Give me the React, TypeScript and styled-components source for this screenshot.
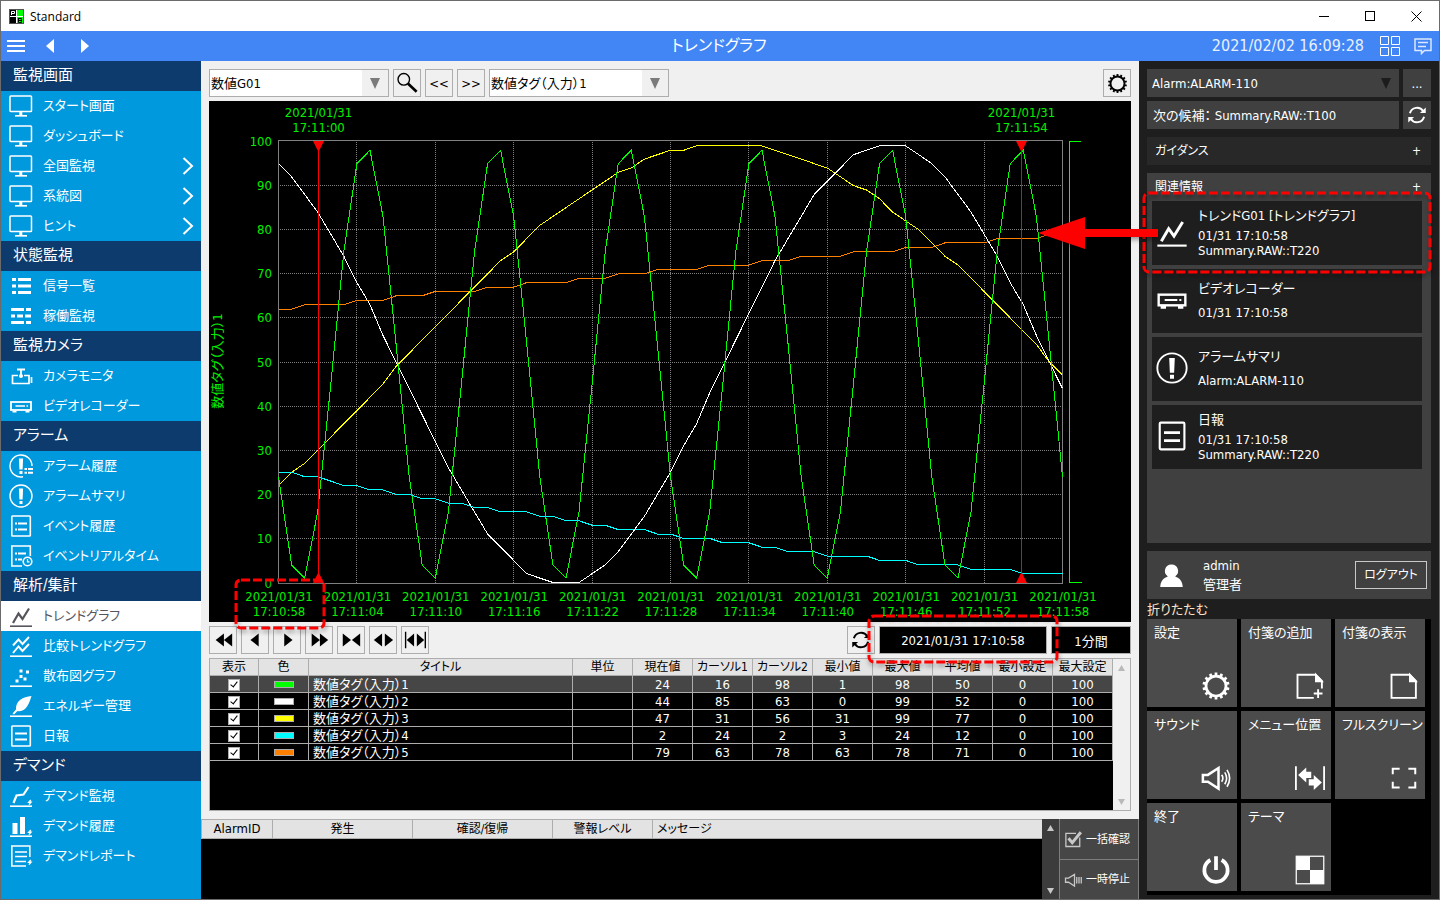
import React from "react";
import styled, { createGlobalStyle, css } from "styled-components";

/* ---------- base ---------- */

const uiFont = `"DejaVu Sans Condensed", "Noto Sans CJK JP", sans-serif`;

const GlobalStyle = createGlobalStyle`
  *, *::before, *::after { box-sizing: border-box; }
  body {
    margin: 0;
    background: #1e1e1e;
    font-family: ${uiFont};
    font-size: 13px;
    line-height: 15px;
    font-feature-settings: "palt";
    color: #000;
  }
  button, input, select, table {
    font: inherit;
    font-feature-settings: inherit;
    color: inherit;
  }
  button { padding: 0; cursor: pointer; }
  a { color: inherit; text-decoration: none; }
  svg { display: block; }
`;

const Window = styled.div`
  display: flex;
  flex-direction: column;
  min-height: 100vh;
  border: 1px solid #6b6b6b;
  white-space: nowrap;
`;

/* ---------- title bar ---------- */

const TitleBar = styled.header`
  display: flex;
  align-items: center;
  height: 30px;
  padding-left: 8px;
  gap: 6px;
  background: #fff;
  font-family: "Open Sans", sans-serif;
  font-size: 12px;
`;

const TitleText = styled.span`
  flex: 1;
`;

const WindowButton = styled.button`
  display: grid;
  place-items: center;
  width: 46px;
  height: 30px;
  border: 0;
  background: none;
`;

const WindowButtons = styled.div`
  display: flex;
`;

/* ---------- application header ---------- */

const AppHeader = styled.div`
  display: grid;
  grid-template-columns: 1fr auto 1fr;
  align-items: center;
  height: 30px;
  padding: 0 7px 0 5px;
  background: #4286f5;
  color: #fff;
`;

const PageTitle = styled.h1`
  margin: 0;
  font-size: 16px;
  font-weight: 400;
  line-height: 24px;
`;

const HeaderGroup = styled.div<{ $end?: boolean }>`
  display: flex;
  align-items: center;
  justify-content: ${(p) => (p.$end ? "flex-end" : "flex-start")};
  gap: ${(p) => (p.$end ? 14 : 0)}px;
`;

const IconButton = styled.button<{ $width?: number }>`
  display: grid;
  place-items: center;
  width: ${(p) => (p.$width ? `${p.$width}px` : "auto")};
  border: 0;
  background: none;
  color: inherit;
`;

const MenuButton = styled(IconButton)`
  margin-right: 6px;
`;

const Clock = styled.time`
  font-size: 16px;
  line-height: 24px;
  margin-right: 2px;
  color: #e8f0ff;
`;

/* ---------- side navigation ---------- */

const Body = styled.div`
  display: grid;
  grid-template-columns: 200px minmax(0, 1fr) 300px;
  flex: 1;
`;

const Sidebar = styled.nav`
  background: #0099dd;
  color: #fff;
`;

const NavHeading = styled.h2`
  margin: 0;
  height: 30px;
  padding-left: 12px;
  background: #0e3b6d;
  font-size: 15px;
  font-weight: 400;
  line-height: 29px;
`;

const NavLink = styled.a<{ $active?: boolean }>`
  display: flex;
  align-items: center;
  height: 30px;
  padding: 0 7px 0 8px;
  gap: 10px;
  font-size: 13px;
  line-height: 20px;
  ${(p) =>
    p.$active &&
    css`
      background: #fff;
      color: #55555c;
    `}
`;

const NavLabel = styled.span`
  flex: 1;
`;

/* ---------- main column ---------- */

const Main = styled.main`
  display: flex;
  flex-direction: column;
  background: #f0f0f0;
`;

const Workspace = styled.section`
  display: flex;
  flex: 1;
  flex-direction: column;
  gap: 4px;
  padding: 8px;
`;

const Toolbar = styled.div`
  display: flex;
  gap: 4px;
`;

const Spacer = styled.div`
  flex: 1;
`;

const ToolButton = styled.button`
  display: grid;
  place-items: center;
  width: 28px;
  height: 28px;
  border: 1px solid #adadad;
  background: #f0f0f0;
`;

const SelectBox = styled.div<{ $dark?: boolean }>`
  display: grid;
  grid-template-columns: minmax(0, 1fr) 26px;
  align-items: center;
  width: ${(p) => (p.$dark ? "auto" : "180px")};
  flex: ${(p) => (p.$dark ? "1" : "none")};
  height: 28px;
  border: ${(p) => (p.$dark ? "0" : "1px solid #adadad")};
  background: ${(p) =>
    p.$dark ? "#404040" : "linear-gradient(to left, #f0f0f0 26px, #fff 26px)"};
  color: ${(p) => (p.$dark ? "#fff" : "#000")};

  select {
    grid-area: 1 / 1 / 2 / 3;
    width: 100%;
    height: 100%;
    padding: 0 28px 0 ${(p) => (p.$dark ? 5 : 1)}px;
    border: 0;
    background: transparent;
    appearance: none;
  }
  svg {
    grid-area: 1 / 2 / 2 / 3;
    justify-self: center;
    pointer-events: none;
    color: ${(p) => (p.$dark ? "#1c1c1c" : "#7b7b7b")};
  }
`;

const ChartFrame = styled.figure`
  position: relative;
  margin: 0;
  background: #000;
`;

const ChartSvg = styled.svg`
  width: 100%;
  height: auto;

  text {
    font-size: 13px;
    fill: #00f000;
  }
`;

const Anchor = styled.div`
  position: relative;
`;

const Readout = styled.input<{ $width: number }>`
  display: block;
  width: ${(p) => p.$width}px;
  height: 28px;
  padding: 0;
  border: 1px solid #adadad;
  border-radius: 0;
  background: #000;
  color: #fff;
  text-align: center;
`;

const CalloutSvg = styled.svg`
  position: absolute;
  z-index: 2;
  overflow: visible;
  pointer-events: none;
  filter: drop-shadow(1px 3px 2px rgba(0, 0, 0, 0.35));
`;

const StartCallout = styled(CalloutSvg)`
  left: 27px;
  bottom: -6px;
  width: 88px;
  height: 48px;
`;

const DateCallout = styled(CalloutSvg)`
  left: -10px;
  top: -10px;
  width: 188px;
  height: 46px;
`;

const CardCallout = styled(CalloutSvg)`
  left: -8px;
  top: -8px;
  width: 286px;
  height: 79px;
`;

const ArrowSvg = styled(CalloutSvg)`
  right: 264px;
  top: 16px;
`;

/* ---------- tables ---------- */

const ListPanel = styled.div`
  display: flex;
  flex: 1;
  min-height: 153px;
  border: 1px solid #adadad;
  background: #000;
`;

const TableArea = styled.div`
  flex: 1;
  min-width: 0;
`;

const DataTable = styled.table`
  width: 100%;
  table-layout: fixed;
  border-collapse: separate;
  border-spacing: 0;

  th {
    padding: 0;
    background: #e3e3e3;
    color: #000;
    font-weight: 400;
    border-right: 1px solid #adadad;
    border-bottom: 1px solid #adadad;
  }
`;

const TrendTable = styled(DataTable)`
  color: #fff;
  text-align: center;

  th,
  td {
    height: 17px;
    padding: 0;
    line-height: 15px;
    border-right: 1px solid #adadad;
    border-bottom: 1px solid #adadad;
  }
  th {
    font-size: 12px;
  }
`;

const TrendRow = styled.tr<{ $selected?: boolean }>`
  background: ${(p) => (p.$selected ? "#464646" : "#000")};

  td:nth-child(3) {
    padding-left: 4px;
    text-align: left;
  }
`;

const Col = styled.col<{ $width?: number }>`
  width: ${(p) => (p.$width ? `${p.$width}px` : "auto")};
`;

const Tick = styled.input`
  display: block;
  width: 12px;
  height: 12px;
  margin: 1px auto 0;
  border: 1px solid #adadad;
  background: #fff;
  appearance: none;

  &:checked::before {
    content: "";
    display: block;
    width: 4px;
    height: 7px;
    margin: 0 0 0 3px;
    border: solid #000;
    border-width: 0 1px 1px 0;
    transform: rotate(38deg);
  }
`;

const Swatch = styled.span<{ $color: string }>`
  display: block;
  width: 20px;
  height: 7px;
  margin: 0 auto;
  border: 1px solid #adadad;
  background: ${(p) => p.$color};
`;

const ScrollBar = styled.div<{ $dark?: boolean }>`
  display: flex;
  flex-direction: column;
  justify-content: space-between;
  align-items: center;
  width: 17px;
  padding: 6px 0 5px;
  background: ${(p) => (p.$dark ? "#3c3c3c" : "#f0f0f0")};
  color: ${(p) => (p.$dark ? "#c8c8c8" : "#b9b9b9")};
`;

const AlarmBar = styled.section`
  display: flex;
  min-height: 80px;
  background: #000;
`;

const AlarmTable = styled(DataTable)`
  th {
    height: 20px;
    border-top: 1px solid #adadad;
    line-height: 18px;
    font-size: 12px;
  }
  th:first-child {
    border-left: 1px solid #adadad;
    font-size: 13px;
  }
  th:last-child {
    padding-left: 4px;
    border-right: 0;
    text-align: left;
  }
`;

const AlarmActions = styled.div`
  display: grid;
  grid-template-rows: 1fr 1fr;
  width: 80px;
  border-left: 1px solid #7d7d7d;
  border-right: 1px solid #7d7d7d;
`;

const AlarmButton = styled.button`
  display: flex;
  align-items: center;
  gap: 4px;
  padding-left: 4px;
  border: 0;
  background: #464646;
  color: #fff;
  font-size: 11px;

  svg {
    color: #c8c8c8;
  }
  & + & {
    border-top: 1px solid #7d7d7d;
  }
`;

/* ---------- right panel ---------- */

const Panel = styled.aside`
  display: flex;
  flex-direction: column;
  gap: 8px;
  padding: 8px 8px 4px;
  background: #1e1e1e;
  color: #fff;
`;

const PanelRows = styled.div`
  display: grid;
  gap: 4px;
`;

const PanelRow = styled.div`
  display: flex;
  gap: 4px;
`;

const PanelButton = styled.button`
  display: grid;
  place-items: center;
  width: 28px;
  height: 28px;
  border: 0;
  background: #404040;
`;

const Candidate = styled.button`
  flex: 1;
  height: 28px;
  padding-left: 6px;
  border: 0;
  background: #404040;
  text-align: left;
`;

const FoldButton = styled.button<{ $open?: boolean }>`
  display: flex;
  align-items: center;
  justify-content: space-between;
  width: 100%;
  height: 28px;
  padding: 0 10px 0 8px;
  border: 0;
  background: ${(p) => (p.$open ? "#404040" : "#282828")};
  font-size: 12px;
`;

const Related = styled.section`
  flex: 1;
  min-height: 370px;
  background: #404040;
`;

const CardList = styled.div`
  display: grid;
  gap: 4px;
  padding: 0 9px 0 5px;
`;

const Card = styled.button`
  display: flex;
  align-items: center;
  width: 100%;
  height: 64px;
  padding: 0 0 2px 4px;
  gap: 10px;
  border: 0;
  background: #1e1e1e;
  text-align: left;
`;

const CardText = styled.span<{ $tight: boolean }>`
  display: grid;
  row-gap: ${(p) => (p.$tight ? 3 : 7)}px;
`;

const CardTitle = styled.span`
  line-height: 18px;
`;

const CardLine = styled.span`
  display: block;
`;

const User = styled.section`
  display: flex;
  align-items: center;
  height: 48px;
  padding: 0 4px 0 12px;
  gap: 19px;
  background: #404040;
`;

const UserName = styled.div`
  flex: 1;
  line-height: 19px;
`;

const Logout = styled.button`
  width: 72px;
  height: 28px;
  border: 1px solid #c8c8c8;
  background: transparent;
  font-size: 12px;
`;

const AccountArea = styled.div`
  display: grid;
`;

const Collapse = styled.button`
  justify-self: start;
  height: 20px;
  border: 0;
  background: none;
  color: #ffe3c8;
`;

const TileGrid = styled.div`
  display: grid;
  grid-template-columns: repeat(3, 90px);
  gap: 4px;
  padding-bottom: 4px;
  background: #000;
`;

const Tile = styled.button`
  display: flex;
  flex-direction: column;
  align-items: flex-start;
  justify-content: space-between;
  height: 88px;
  padding: 5px 6px 6px 7px;
  border: 0;
  background: #4b4b4b;
  line-height: 18px;

  svg {
    align-self: flex-end;
  }
`;

/* ---------- icons ---------- */

type IconProps = { size?: number; children: React.ReactNode };

const Icon = ({ size = 24, children }: IconProps) => (
  <svg
    width={size}
    height={size}
    viewBox="0 0 24 24"
    fill="none"
    stroke="currentColor"
    strokeWidth={2}
    aria-hidden
  >
    {children}
  </svg>
);

type TriangleProps = { dir: "up" | "down" | "left" | "right"; w?: number; h?: number };

const Triangle = ({ dir, w = 10, h = 11 }: TriangleProps) => {
  const d = {
    up: `M0 ${h}L${w / 2} 0L${w} ${h}Z`,
    down: `M0 0H${w}L${w / 2} ${h}Z`,
    left: `M${w} 0V${h}L0 ${h / 2}Z`,
    right: `M0 0V${h}L${w} ${h / 2}Z`,
  }[dir];
  return (
    <svg width={w} height={h} viewBox={`0 0 ${w} ${h}`} fill="currentColor" aria-hidden>
      <path d={d} />
    </svg>
  );
};

const baseLine = <path d="M1 22.2H23" strokeWidth="1.6" />;
const bolt = <path d="M21.8 16l-2 2.2h2.2l-2 2.4" strokeWidth="1.4" />;
const exclamation = (
  <path
    d="M9.9 4.5H14.1L13.6 15.5H10.4Z M10.5 17H13.5V20H10.5Z"
    fill="currentColor"
    stroke="none"
  />
);

const glyphs: Record<string, React.ReactNode> = {
  monitor: (
    <>
      <rect x="1" y="2" width="21.5" height="15.5" rx="0.8" strokeWidth="1.5" />
      <path d="M11.8 17.5V21" strokeWidth="3" />
      <path d="M6 21.8H18" strokeWidth="1.7" />
    </>
  ),
  list: <path d="M3 5.5H7M9 5.5H22M3 12H7M9 12H22M3 18.5H7M9 18.5H22" strokeWidth="3" />,
  status: <path d="M2 5.5H15M17 5.5H22M2 12H6M8 12H14M16 12H22M2 18.5H15M17 18.5H22" strokeWidth="2.8" />,
  camera: (
    <>
      <path d="M8 5.5H16M12 5.5V11" strokeWidth="1.8" />
      <path d="M9 11.5H3.5V19.5H20V11.5H15M22.5 13V19" strokeWidth="1.7" />
      <circle cx="12" cy="12" r="2" fill="currentColor" stroke="none" />
    </>
  ),
  recorder: (
    <>
      <rect x="2" y="8" width="20" height="8" strokeWidth="1.8" />
      <path d="M6.5 12H16M17.5 12H19" strokeWidth="1.5" />
      <path d="M3.5 17.5H7.5M16.5 17.5H20.5" strokeWidth="2" />
    </>
  ),
  alarm: (
    <>
      <circle cx="12" cy="12" r="11" strokeWidth="1.4" />
      {exclamation}
    </>
  ),
  alarmHistory: (
    <>
      <path d="M23 12A11 11 0 1 0 14 22.8" strokeWidth="1.4" />
      {exclamation}
      <path d="M15.5 15H18M19 15H24M15.5 18.8H18M19 18.8H24" strokeWidth="2" />
    </>
  ),
  event: (
    <>
      <rect x="2.8" y="2" width="18.5" height="20" rx="0.8" strokeWidth="1.6" />
      <path d="M6 9.5H8M9 9.5H18M6 15.5H8M9 15.5H18" strokeWidth="2" />
    </>
  ),
  eventLive: (
    <>
      <path d="M13 22H2.8V2H21.3V12" strokeWidth="1.6" />
      <path d="M6 9.5H8M9 9.5H17M6 15.5H8M9 15.5H13" strokeWidth="2" />
      <circle cx="18.5" cy="17.5" r="4.3" strokeWidth="1.6" />
      <path d="M18.5 15V17.8H20.5" strokeWidth="1.2" />
    </>
  ),
  trend: (
    <>
      <path d="M4 19L9.5 9.5L13.5 15L20 4.5" strokeWidth="2.2" />
      {baseLine}
    </>
  ),
  compare: (
    <>
      <path d="M4 11.5L9.5 5.5L13.5 10L20 3M4 19L9.5 12.5L13.5 17L20 10" strokeWidth="1.9" />
      {baseLine}
    </>
  ),
  scatter: (
    <>
      <path d="M6.5 17H9.5M10.5 12.5H13.5M10.5 7H13.5M14.5 15H17.5M17 8H20" strokeWidth="3" />
      {baseLine}
    </>
  ),
  leaf: (
    <>
      <path
        d="M22.5 2C14 3 6.5 6.500 7 15.5L3.500 19.5L5 20.5L8.5 17C17 18.5 20 10 22.5 2Z"
        fill="currentColor"
        stroke="none"
      />
      {baseLine}
    </>
  ),
  report: (
    <>
      <rect x="2.8" y="2" width="18.5" height="20" rx="0.8" strokeWidth="1.6" />
      <path d="M6 9.5H18M6 15.5H18" strokeWidth="2" />
    </>
  ),
  demand: (
    <>
      <path d="M4.5 19L7.5 11.5L14.5 10.5L19.5 3" strokeWidth="2.2" />
      {bolt}
      {baseLine}
    </>
  ),
  demandBars: (
    <>
      <path d="M6 20V9M13.5 20V3" strokeWidth="5" />
      {bolt}
      {baseLine}
    </>
  ),
  demandReport: (
    <>
      <path d="M17 22H2.8V2H20.8V13" strokeWidth="1.6" />
      <path d="M6 8H18M6 12.5H18M6 17.5H17" strokeWidth="1.7" />
      {bolt}
    </>
  ),
  person: (
    <path
      d="M12 1.5a6.2 6.2 0 0 1 3.5 11.4C20 14.2 22.6 18 22.8 23H1.2C1.400 18 4 14.2 8.5 12.9A6.2 6.2 0 0 1 12 1.5Z"
      fill="currentColor"
      stroke="none"
    />
  ),
  note: (
    <>
      <path d="M2 3H16.5L21.5 8V21.500H2Z" strokeWidth="1.5" />
      <path d="M16.5 2.5V8.5H22Z" fill="currentColor" strokeWidth="1" />
    </>
  ),
  noteAdd: (
    <>
      <path d="M15 21.5H2V3H16.5L21.5 8V14" strokeWidth="1.5" />
      <path d="M16.5 2.5V8.5H22Z" fill="currentColor" strokeWidth="1" />
      <path d="M18.5 14.5V21.5M15 18H22" strokeWidth="1.5" />
    </>
  ),
  sound: (
    <>
      <path d="M1.5 9.5H5.5L14 4V20.500L5.500 15H1.5Z" strokeWidth="2" />
      <path
        d="M16.5 9.500Q18.5 12 16.5 15M19 7.500Q22 12 19 17M20.800 5.500Q25 12 20.800 19"
        strokeWidth="1.3"
      />
    </>
  ),
  soundOff: (
    <path d="M2 9.5H6L14 4.5V20L6 15H2ZM17 8V16.5M20 8V16.5M23 8V16.5" strokeWidth="1.7" />
  ),
  position: (
    <>
      <path d="M0.7 2.5V21.5M23.3 2.5V21.5" strokeWidth="1.5" />
      <path
        d="M2.5 9.5L9 3.5V7H13V12H9V15.5ZM21.5 15.5L15 9.5V13H11V18H15V21.5Z"
        fill="currentColor"
        stroke="none"
      />
    </>
  ),
  fullscreen: (
    <path d="M3 9V4.500H8.5M15.5 4.5H21V9M21 15V19.5H15.5M8.5 19.5H3V15" strokeWidth="1.6" />
  ),
  power: (
    <>
      <path d="M7.5 4A9.3 9.3 0 1 0 16.5 4" strokeWidth="3" />
      <path d="M12 1V12" strokeWidth="3" />
    </>
  ),
  theme: (
    <>
      <rect x="1" y="1" width="22" height="22" strokeWidth="1" />
      <path d="M1 1H12V12H1ZM12 12H23V23H12Z" fill="currentColor" stroke="none" />
    </>
  ),
  refresh: (
    <>
      <path
        d="M3.5 10A8.8 8.8 0 0 1 19.5 7.5M20.5 14A8.8 8.8 0 0 1 4.5 16.5"
        strokeWidth="2.3"
      />
      <path d="M15.5 9.5H22.5V3ZM8.5 14.5H1.5V21Z" fill="currentColor" stroke="none" />
    </>
  ),
  search: (
    <>
      <circle cx="8.5" cy="8" r="6.3" strokeWidth="1.5" />
      <path d="M13 12.5L22.5 21.5" strokeWidth="2.9" />
    </>
  ),
  check: (
    <>
      <path d="M21 10V22H2.5V4.5H16" strokeWidth="1.7" />
      <path d="M6 11L11 17L22.5 3" strokeWidth="4" />
    </>
  ),
};

const Glyph = ({ name, size }: { name: string; size?: number }) => (
  <Icon size={size}>{glyphs[name]}</Icon>
);

const Gear = ({ size = 24 }: { size?: number }) => (
  <Icon size={size}>
    <circle cx="12" cy="12" r="8" strokeWidth="2.2" />
    {Array.from({ length: 14 }, (_, i) => (
      <path
        key={i}
        d="M12 1.2V3.6"
        strokeWidth="2.2"
        transform={`rotate(${(i * 360) / 14} 12 12)`}
      />
    ))}
  </Icon>
);

const Chevron = () => (
  <svg width="12" height="18" viewBox="0 0 12 18" fill="none" stroke="currentColor" strokeWidth="2" aria-hidden>
    <path d="M1.5 1L10 9L1.5 17" />
  </svg>
);

const Logo = () => (
  <svg width="15" height="15" viewBox="0 0 15 15" aria-hidden>
    <rect width="15" height="15" fill="#555" />
    <rect x="1" y="1" width="6" height="13" fill="#000" />
    <rect x="8" y="1" width="6" height="13" fill="#00ff00" />
    <path d="M7.5 1V14M1 7.5H14" stroke="#fff" />
    <path d="M2.5 6V2.5H5.5V4.5H3" fill="none" stroke="#fff" />
    <path d="M9.5 9V13.500H12.5V9.5H10M10 11.5H12" fill="none" stroke="#000" />
  </svg>
);

/* ---------- trend chart ---------- */

const seconds = Array.from({ length: 61 }, (_, i) => i);
const pulse = [24, 4, 1, 16, 45, 75, 95, 98, 83, 54];
const wave = (peak: number, period: number) =>
  seconds.map((s) =>
    Math.min(99, Math.floor(50 * (1 + Math.cos((2 * Math.PI * (s - peak)) / period))))
  );
const steps = (start: number, delta: number, runs: number[]) =>
  runs.flatMap((count, i) => Array<number>(count).fill(start + delta * i));

const series = [
  {
    stroke: "#ff8000",
    values: steps(62, 1, [2, 4, 3, 3, 4, 3, 4, 3, 3, 4, 4, 3, 4, 4, 3, 4, 4, 2]),
  },
  {
    stroke: "#00ffff",
    values: steps(25, -1, [2, 2, 1, 2, 2, 2, 2, 2, 2, 3, 2, 2, 2, 3, 2, 3, 3, 2, 3, 4, 3, 4, 4, 4]),
  },
  { stroke: "#ffff00", values: wave(34.3, 100) },
  { stroke: "#ffffff", values: wave(46.6, 50) },
  { stroke: "#00ff00", values: seconds.map((s) => pulse[s % 10]) },
];

const plot = { left: 69, top: 39, width: 784, height: 443 };
const xAt = (s: number) => plot.left + (s * plot.width) / 60;
const yAt = (v: number) => 481.5 - v * 4.41;
const gridX = seconds.filter((s) => s % 6 === 0);
const gridY = [0, 10, 20, 30, 40, 50, 60, 70, 80, 90, 100];
const gridTop = (v: number) => Math.round(481.6 - v * 4.42) + 0.5;
const timeLabel = (s: number) =>
  `17:${s < 2 ? "10" : "11"}:${String((58 + s) % 60).padStart(2, "0")}`;

const cursors = [
  { x: 109.5, second: 2 },
  { x: 812.5, second: 56 },
];

const TimeText = ({ x, y, s }: { x: number; y: number; s: number }) => (
  <text textAnchor="middle" x={x} y={y}>
    <tspan x={x}>2021/01/31</tspan>
    <tspan x={x} dy="15">
      {timeLabel(s)}
    </tspan>
  </text>
);

const TrendChart = () => (
  <ChartSvg viewBox="0 0 922 521" role="img" aria-label="トレンドグラフ">
    <g fill="none" stroke="#808080" strokeDasharray="1 1" shapeRendering="crispEdges">
      {gridX.slice(1, -1).map((s) => (
        <path key={s} d={`M${Math.round(xAt(s)) + 0.5} ${plot.top}V482`} />
      ))}
      {gridY.slice(1, -1).map((v) => (
        <path key={v} d={`M${plot.left} ${gridTop(v)}H853`} />
      ))}
    </g>
    <rect
      x={plot.left + 0.5}
      y={plot.top + 0.5}
      width={plot.width}
      height={plot.height}
      fill="none"
      stroke="#808080"
      shapeRendering="crispEdges"
    />
    {series.map(({ stroke, values }) => (
      <polyline
        key={stroke}
        points={values.map((v, s) => `${(xAt(s) + 0.5).toFixed(1)},${yAt(v).toFixed(1)}`).join(" ")}
        fill="none"
        stroke={stroke}
        shapeRendering="crispEdges"
      />
    ))}
    <path
      d="M872 40.5H860.5V481.5H873"
      fill="none"
      stroke="#00ff00"
      shapeRendering="crispEdges"
    />
    {cursors.map(({ x, second }) => (
      <g key={second}>
        <path d={`M${x} 40V482`} stroke="#ff0000" shapeRendering="crispEdges" />
        <path
          d={`M${x - 5.5} 40H${x + 5.5}L${x} 51ZM${x - 5.5} 482H${x + 5.5}L${x} 471Z`}
          fill="#ff0000"
        />
        <TimeText x={x} y={16} s={second} />
      </g>
    ))}
    {gridY.map((v) => (
      <text key={v} x="63" y={gridTop(v) + 4} textAnchor="end">
        {v}
      </text>
    ))}
    {gridX.map((s) => (
      <TimeText key={s} x={xAt(s) + 1} y={500} s={s} />
    ))}
    <text transform="translate(13 260) rotate(-90)" textAnchor="middle">
      数値タグ（入力）1
    </text>
  </ChartSvg>
);

const DashedRect = () => (
  <rect
    width="100%"
    height="100%"
    rx="5"
    fill="none"
    stroke="#ff0000"
    strokeWidth="3"
    strokeDasharray="9 3"
  />
);

/* ---------- content ---------- */

type NavEntry = { label: string; icon: string; more?: boolean; active?: boolean };

const navigation: { title: string; items: NavEntry[] }[] = [
  {
    title: "監視画面",
    items: [
      { label: "スタート画面", icon: "monitor" },
      { label: "ダッシュボード", icon: "monitor" },
      { label: "全国監視", icon: "monitor", more: true },
      { label: "系統図", icon: "monitor", more: true },
      { label: "ヒント", icon: "monitor", more: true },
    ],
  },
  {
    title: "状態監視",
    items: [
      { label: "信号一覧", icon: "list" },
      { label: "稼働監視", icon: "status" },
    ],
  },
  {
    title: "監視カメラ",
    items: [
      { label: "カメラモニタ", icon: "camera" },
      { label: "ビデオレコーダー", icon: "recorder" },
    ],
  },
  {
    title: "アラーム",
    items: [
      { label: "アラーム履歴", icon: "alarmHistory" },
      { label: "アラームサマリ", icon: "alarm" },
      { label: "イベント履歴", icon: "event" },
      { label: "イベントリアルタイム", icon: "eventLive" },
    ],
  },
  {
    title: "解析/集計",
    items: [
      { label: "トレンドグラフ", icon: "trend", active: true },
      { label: "比較トレンドグラフ", icon: "compare" },
      { label: "散布図グラフ", icon: "scatter" },
      { label: "エネルギー管理", icon: "leaf" },
      { label: "日報", icon: "report" },
    ],
  },
  {
    title: "デマンド",
    items: [
      { label: "デマンド監視", icon: "demand" },
      { label: "デマンド履歴", icon: "demandBars" },
      { label: "デマンドレポート", icon: "demandReport" },
    ],
  },
];

const trendHeads = [
  "表示", "色", "タイトル", "単位", "現在値", "カーソル1", "カーソル2",
  "最小値", "最大値", "平均値", "最小設定", "最大設定",
];

const trendRows = [
  { color: "#00ff00", values: [24, 16, 98, 1, 98, 50, 0, 100] },
  { color: "#ffffff", values: [44, 85, 63, 0, 99, 52, 0, 100] },
  { color: "#ffff00", values: [47, 31, 56, 31, 99, 77, 0, 100] },
  { color: "#00ffff", values: [2, 24, 2, 3, 24, 12, 0, 100] },
  { color: "#ff8000", values: [79, 63, 78, 63, 78, 71, 0, 100] },
];

const cards = [
  { title: "トレンドG01 [トレンドグラフ]", icon: "trend", lines: ["01/31 17:10:58", "Summary.RAW::T220"] },
  { title: "ビデオレコーダー", icon: "recorder", lines: ["01/31 17:10:58"] },
  { title: "アラームサマリ", icon: "alarm", lines: ["Alarm:ALARM-110"] },
  { title: "日報", icon: "report", lines: ["01/31 17:10:58", "Summary.RAW::T220"] },
];

const tiles = [
  { label: "設定", icon: "gear" },
  { label: "付箋の追加", icon: "noteAdd" },
  { label: "付箋の表示", icon: "note" },
  { label: "サウンド", icon: "sound" },
  { label: "メニュー位置", icon: "position" },
  { label: "フルスクリーン", icon: "fullscreen" },
  { label: "終了", icon: "power" },
  { label: "テーマ", icon: "theme" },
];

const playback = [
  { label: "早戻し", d: "M13 5V19L4 12ZM22 5V19L13 12Z" },
  { label: "戻る", d: "M16 5V19L7 12Z" },
  { label: "進む", d: "M9 5V19L18 12Z" },
  { label: "早送り", d: "M4 5V19L13 12ZM13 5V19L22 12Z" },
  { label: "縮小", d: "M3 5V19L12 12ZM22 5V19L13 12Z" },
  { label: "拡大", d: "M11 5V19L2 12ZM14 5V19L23 12Z" },
  { label: "全体", d: "M11 5V19L3 12ZM14 5V19L22 12ZM1 3H2.5V21H1ZM22.5 3H24V21H22.5Z" },
];

/* ---------- page parts ---------- */

const Navigation = () => (
  <Sidebar>
    {navigation.map((group) => (
      <React.Fragment key={group.title}>
        <NavHeading>{group.title}</NavHeading>
        {group.items.map((item) => (
          <NavLink key={item.label} href="#" $active={item.active}>
            <Glyph name={item.icon} />
            <NavLabel>{item.label}</NavLabel>
            {item.more && <Chevron />}
          </NavLink>
        ))}
      </React.Fragment>
    ))}
  </Sidebar>
);

const TrendList = () => (
  <ListPanel>
    <TableArea>
      <TrendTable>
        <colgroup>
          <Col $width={49} />
          <Col $width={50} />
          <Col />
          {trendHeads.slice(3).map((head) => (
            <Col key={head} $width={60} />
          ))}
        </colgroup>
        <thead>
          <tr>
            {trendHeads.map((head) => (
              <th key={head} scope="col">
                {head}
              </th>
            ))}
          </tr>
        </thead>
        <tbody>
          {trendRows.map((row, i) => (
            <TrendRow key={row.color} $selected={i === 0}>
              <td>
                <Tick type="checkbox" defaultChecked aria-label={`数値タグ（入力）${i + 1}`} />
              </td>
              <td>
                <Swatch $color={row.color} />
              </td>
              <td>数値タグ（入力）{i + 1}</td>
              <td />
              {row.values.map((value, k) => (
                <td key={k}>{value}</td>
              ))}
            </TrendRow>
          ))}
        </tbody>
      </TrendTable>
    </TableArea>
    <ScrollBar>
      <Triangle dir="up" w={7} h={6} />
      <Triangle dir="down" w={7} h={6} />
    </ScrollBar>
  </ListPanel>
);

const AlarmList = () => (
  <AlarmBar>
    <TableArea>
      <AlarmTable>
        <colgroup>
          <Col $width={72} />
          <Col $width={140} />
          <Col $width={140} />
          <Col $width={100} />
          <Col />
        </colgroup>
        <thead>
          <tr>
            <th scope="col">AlarmID</th>
            <th scope="col">発生</th>
            <th scope="col">確認/復帰</th>
            <th scope="col">警報レベル</th>
            <th scope="col">メッセージ</th>
          </tr>
        </thead>
      </AlarmTable>
    </TableArea>
    <ScrollBar $dark>
      <Triangle dir="up" w={7} h={6} />
      <Triangle dir="down" w={7} h={6} />
    </ScrollBar>
    <AlarmActions>
      <AlarmButton>
        <Glyph name="check" size={18} />
        一括確認
      </AlarmButton>
      <AlarmButton>
        <Glyph name="soundOff" size={18} />
        一時停止
      </AlarmButton>
    </AlarmActions>
  </AlarmBar>
);

const SidePanel = () => (
  <Panel>
    <PanelRows>
      <PanelRow>
        <SelectBox $dark>
          <select aria-label="アラーム">
            <option>Alarm:ALARM-110</option>
          </select>
          <Triangle dir="down" />
        </SelectBox>
        <PanelButton>...</PanelButton>
      </PanelRow>
      <PanelRow>
        <Candidate>次の候補： Summary.RAW::T100</Candidate>
        <PanelButton aria-label="更新">
          <Glyph name="refresh" size={20} />
        </PanelButton>
      </PanelRow>
    </PanelRows>
    <FoldButton>
      <span>ガイダンス</span>
      <span>+</span>
    </FoldButton>
    <Related>
      <FoldButton $open>
        <span>関連情報</span>
        <span>+</span>
      </FoldButton>
      <CardList>
        {cards.map((card, i) => (
          <Anchor key={card.title}>
            <Card>
              <Glyph name={card.icon} size={32} />
              <CardText $tight={card.lines.length > 1}>
                <CardTitle>{card.title}</CardTitle>
                <span>
                  {card.lines.map((line) => (
                    <CardLine key={line}>{line}</CardLine>
                  ))}
                </span>
              </CardText>
            </Card>
            {i === 0 && (
              <>
                <CardCallout aria-hidden>
                  <DashedRect />
                </CardCallout>
                <ArrowSvg width="120" height="32" viewBox="0 0 120 32" aria-hidden>
                  <path d="M0 16L47 0V12H120V20H47V32Z" fill="#ff0000" />
                </ArrowSvg>
              </>
            )}
          </Anchor>
        ))}
      </CardList>
    </Related>
    <AccountArea>
      <User>
        <Glyph name="person" size={25} />
        <UserName>
          admin
          <br />
          管理者
        </UserName>
        <Logout>ログアウト</Logout>
      </User>
      <Collapse>折りたたむ</Collapse>
      <TileGrid>
        {tiles.map((tile) => (
          <Tile key={tile.label}>
            {tile.label}
            {tile.icon === "gear" ? <Gear size={30} /> : <Glyph name={tile.icon} size={30} />}
          </Tile>
        ))}
      </TileGrid>
    </AccountArea>
  </Panel>
);

export default function App() {
  return (
    <>
      <GlobalStyle />
      <Window>
        <TitleBar>
          <Logo />
          <TitleText>Standard</TitleText>
          <WindowButtons>
            <WindowButton aria-label="最小化">
              <svg width="11" height="11" stroke="#000" fill="none">
                <path d="M0 5.5H10" />
              </svg>
            </WindowButton>
            <WindowButton aria-label="最大化">
              <svg width="11" height="11" stroke="#000" fill="none">
                <rect x="0.5" y="0.5" width="9" height="9" />
              </svg>
            </WindowButton>
            <WindowButton aria-label="閉じる">
              <svg width="11" height="11" stroke="#000" fill="none">
                <path d="M0.5 0.5L10.5 10.5M10.5 0.5L0.5 10.5" />
              </svg>
            </WindowButton>
          </WindowButtons>
        </TitleBar>
        <AppHeader>
          <HeaderGroup>
            <MenuButton aria-label="メニュー">
              <svg width="20" height="14" viewBox="0 0 20 14" stroke="currentColor" strokeWidth="2">
                <path d="M1 2H19M1 7H19M1 12H19" />
              </svg>
            </MenuButton>
            <IconButton aria-label="前へ" $width={35}>
              <Triangle dir="left" w={8} h={14} />
            </IconButton>
            <IconButton aria-label="次へ" $width={35}>
              <Triangle dir="right" w={8} h={14} />
            </IconButton>
          </HeaderGroup>
          <PageTitle>トレンドグラフ</PageTitle>
          <HeaderGroup $end>
            <Clock>2021/02/02 16:09:28</Clock>
            <IconButton aria-label="分割表示">
              <svg width="20" height="20" viewBox="0 0 20 20" fill="none" stroke="currentColor">
                <path d="M0.5 0.5H8.5V8.5H0.5ZM11.5 0.5H19.5V8.5H11.5ZM0.5 11.5H8.5V19.5H0.5ZM11.5 11.5H19.5V19.5H11.5Z" />
              </svg>
            </IconButton>
            <IconButton aria-label="メッセージ">
              <svg width="18" height="18" viewBox="0 0 18 18" fill="none" stroke="#dce8ff" strokeWidth="1.5">
                <path d="M1 2H17V13.5H10.5L7.5 16.5V13.5H1ZM4 5.5H14M4 9.5H12" />
              </svg>
            </IconButton>
          </HeaderGroup>
        </AppHeader>
        <Body>
          <Navigation />
          <Main>
            <Workspace>
              <Toolbar>
                <SelectBox>
                  <select aria-label="グループ">
                    <option>数値G01</option>
                  </select>
                  <Triangle dir="down" />
                </SelectBox>
                <ToolButton aria-label="検索">
                  <Glyph name="search" size={22} />
                </ToolButton>
                <ToolButton>&lt;&lt;</ToolButton>
                <ToolButton>&gt;&gt;</ToolButton>
                <SelectBox>
                  <select aria-label="タグ">
                    <option>数値タグ（入力）1</option>
                  </select>
                  <Triangle dir="down" />
                </SelectBox>
                <Spacer />
                <ToolButton aria-label="設定">
                  <Gear size={21} />
                </ToolButton>
              </Toolbar>
              <ChartFrame>
                <TrendChart />
                <StartCallout aria-hidden>
                  <DashedRect />
                </StartCallout>
              </ChartFrame>
              <Toolbar>
                {playback.map((button) => (
                  <ToolButton key={button.label} aria-label={button.label}>
                    <Icon size={22}>
                      <path d={button.d} fill="currentColor" stroke="none" />
                    </Icon>
                  </ToolButton>
                ))}
                <Spacer />
                <ToolButton aria-label="更新">
                  <Glyph name="refresh" size={20} />
                </ToolButton>
                <Anchor>
                  <Readout
                    $width={168}
                    readOnly
                    defaultValue="2021/01/31 17:10:58"
                    aria-label="開始日時"
                  />
                  <DateCallout aria-hidden>
                    <DashedRect />
                  </DateCallout>
                </Anchor>
                <Readout $width={80} readOnly defaultValue="1分間" aria-label="表示期間" />
              </Toolbar>
              <TrendList />
            </Workspace>
            <AlarmList />
          </Main>
          <SidePanel />
        </Body>
      </Window>
    </>
  );
}
